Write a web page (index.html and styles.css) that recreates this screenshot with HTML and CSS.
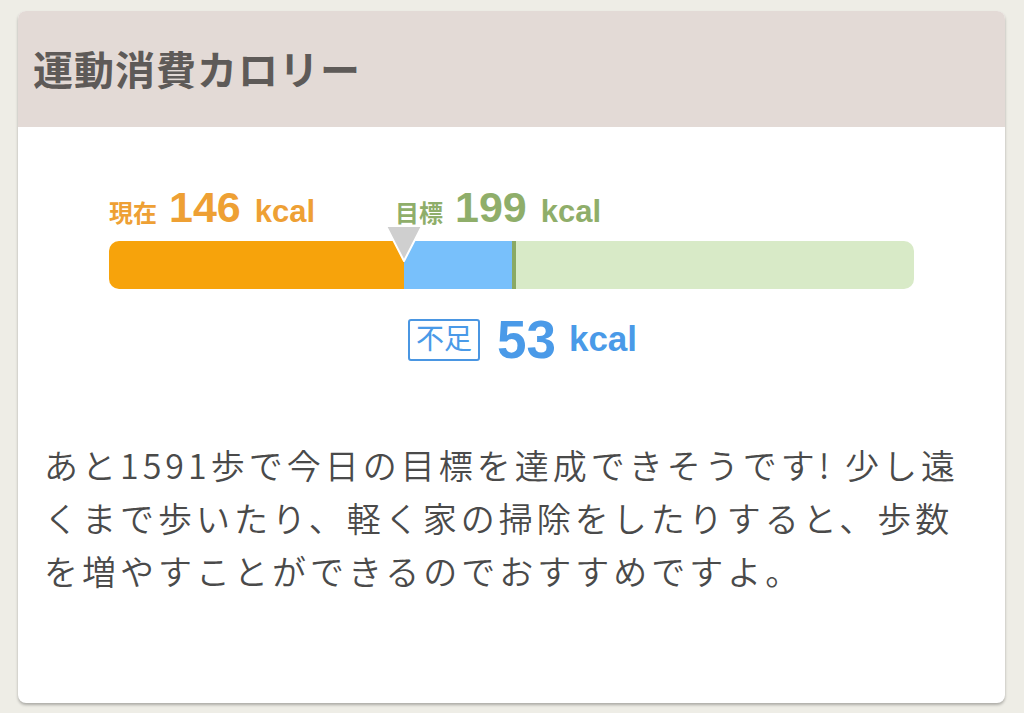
FILE: index.html
```html
<!DOCTYPE html>
<html lang="ja">
<head>
<meta charset="utf-8">
<title>運動消費カロリー</title>
<link rel="stylesheet" href="styles.css">
</head>
<body>
<section class="card">
  <header class="card-head">
    <h1 class="card-title">運動消費カロリー</h1>
  </header>
  <div class="card-body">
    <div class="gauge">
      <div class="gauge-labels">
        <div class="label label-now" style="width:286px">
          <span class="label-name">現在</span>
          <span class="label-num">146</span>
          <span class="label-unit">kcal</span>
        </div>
        <div class="label label-goal">
          <span class="label-name">目標</span>
          <span class="label-num">199</span>
          <span class="label-unit">kcal</span>
        </div>
      </div>
      <div class="bar-wrap">
        <div class="bar">
          <div class="seg seg-now" style="width:295px"></div>
          <div class="seg seg-short" style="width:108px"></div>
          <div class="seg seg-goal-line"></div>
          <div class="seg seg-rest"></div>
        </div>
        <svg class="marker" style="left:276px" width="38" height="38" viewBox="0 0 38 38">
          <polygon points="1,1 37,1 19,36" fill="#cfcfcf" stroke="#ffffff" stroke-width="2" stroke-linejoin="round"/>
        </svg>
      </div>
      <div class="deficit">
        <span class="deficit-tag">不足</span>
        <span class="deficit-num">53</span>
        <span class="deficit-unit">kcal</span>
      </div>
    </div>
    <p class="advice">あと1591歩で今日の目標を達成できそうです! 少し遠<br>くまで歩いたり、軽く家の掃除をしたりすると、歩数<br>を増やすことができるのでおすすめですよ。</p>
  </div>
</section>
</body>
</html>
```

FILE: styles.css
```css
html, body {
  margin: 0;
  padding: 0;
}
body {
  background: #eeede6;
  width: 1024px;
  height: 713px;
  overflow: hidden;
  padding: 11px 19px 0 18px;
  box-sizing: border-box;
  font-family: "Liberation Sans", "Noto Sans CJK JP", sans-serif;
}
.card {
  width: 987px;
  height: 692px;
  background: #ffffff;
  border-radius: 8px;
  box-shadow: 0 2px 3px rgba(0, 0, 0, 0.28);
  overflow: hidden;
}
.card-head {
  height: 116px;
  background: #e3dad6;
  display: flex;
  align-items: center;
  padding-left: 15px;
}
.card-title {
  margin: 0;
  font-size: 40px;
  font-weight: 700;
  letter-spacing: 1px;
  color: #5e5a58;
  padding-bottom: 2px;
}
.card-body {
  padding: 60px 0 0 26px;
}
.gauge {
  width: 805px;
  margin-left: 65px;
}
.gauge-labels {
  display: flex;
  align-items: baseline;
  height: 40px;
  line-height: 40px;
}
.label {
  display: flex;
  align-items: baseline;
  white-space: nowrap;
  font-weight: 700;
}
.label-name {
  font-size: 24px;
  margin-right: 12px;
}
.label-num {
  font-size: 43px;
  margin-right: 14px;
}
.label-unit {
  font-size: 31px;
}
.label-now {
  color: #eea034;
}
.label-goal {
  color: #8fae6a;
}
.bar-wrap {
  position: relative;
  margin-top: 14px;
}
.bar {
  display: flex;
  height: 48px;
  border-radius: 10px;
  overflow: hidden;
}
.seg-now {
  background: #f7a30b;
}
.seg-short {
  background: #78c0fb;
}
.seg-goal-line {
  width: 4px;
  background: #8aa963;
}
.seg-rest {
  flex: 1;
  background: #d8eac7;
}
.marker {
  position: absolute;
  top: -16px;
  display: block;
}
.deficit {
  display: flex;
  align-items: center;
  justify-content: center;
  padding-left: 22px;
  margin-top: 29px;
  color: #4a9ae8;
  white-space: nowrap;
}
.deficit-tag {
  border: 2px solid #4a96e2;
  border-radius: 3px;
  font-size: 28px;
  line-height: 38px;
  padding: 0 6px;
  margin-right: 17px;
}
.deficit-num {
  font-size: 53px;
  font-weight: 700;
  line-height: 42px;
  margin-right: 13px;
}
.deficit-unit {
  font-size: 35px;
  font-weight: 700;
  line-height: 42px;
  align-self: flex-end;
  padding-bottom: 1px;
}
.advice {
  margin: 77px 0 0 0;
  font-family: "Noto Sans CJK JP", sans-serif;
  font-size: 34px;
  font-weight: 350;
  letter-spacing: 4px;
  line-height: 53px;
  color: #4a4a4a;
  white-space: nowrap;
}
```
